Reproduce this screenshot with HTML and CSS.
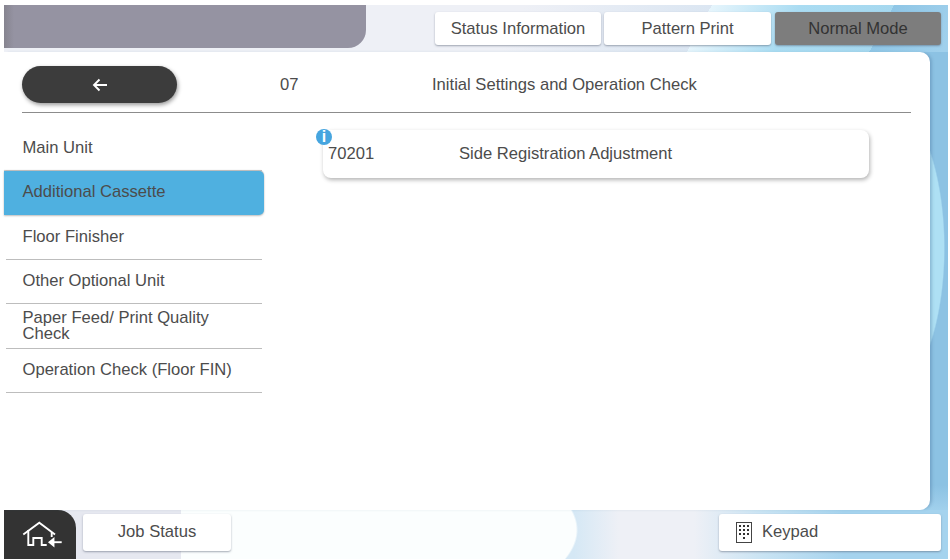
FILE: index.html
```html
<!DOCTYPE html>
<html lang="en">
<head>
    <meta charset="UTF-8">
    <title>Initial Settings and Operation Check</title>
    <link rel="stylesheet" href="styles.css">
</head>
<body>
    <div class="screen">
        <header class="top-bar">
            <div class="top-plate"></div>
            <div class="top-buttons">
                <button class="top-btn">Status Information</button>
                <button class="top-btn wide">Pattern Print</button>
                <button class="top-btn mode">Normal Mode</button>
            </div>
        </header>
        <main class="panel">
            <div class="title-row">
                <button class="back-btn">
                    <svg width="16" height="14" viewBox="0 0 16 14"><path d="M15 7H2M7.500 1.500 2 7l5.500 5.500" fill="none" stroke="#fff" stroke-width="1.900"/></svg>
                </button>
                <span class="title-code">07</span>
                <span class="title-text">Initial Settings and Operation Check</span>
            </div>
            <div class="body-row">
                <ul class="side-menu">
                    <li class="side-item">Main Unit</li>
                    <li class="side-item active">Additional Cassette</li>
                    <li class="side-item">Floor Finisher</li>
                    <li class="side-item">Other Optional Unit</li>
                    <li class="side-item tight">Paper Feed/ Print Quality Check</li>
                    <li class="side-item">Operation Check (Floor FIN)</li>
                </ul>
                <div class="content">
                    <div class="adjust-card">
                        <span class="info-badge">i</span>
                        <span class="adjust-code">70201</span>
                        <span class="adjust-name">Side Registration Adjustment</span>
                    </div>
                </div>
            </div>
        </main>
        <footer class="bottom-bar">
            <button class="home-btn">
                <svg width="44" height="30" viewBox="0 0 44 30" fill="none" stroke="#fff" stroke-width="1.900">
                    <path d="M3.300 14.500 19.300 2.800 35 14.500"/>
                    <path d="M8.300 10V25H13.300V18H21.700V25H26.700"/>
                    <path d="M31.700 12v5"/>
                    <path d="M41.700 22.200H30"/>
                    <path d="M33.500 19 29.500 22.200l4 3.200z" fill="#fff"/>
                </svg>
            </button>
            <button class="job-btn">Job Status</button>
            <button class="keypad-btn">
                <svg width="16" height="21" viewBox="0 0 16 21">
                    <rect x=".5" y=".5" width="15" height="20" fill="#fff" stroke="#444"/>
                    <path d="M3 3h2v2H3zM7 3h2v2H7zM11 3h2v2h-2zM3 7h2v2H3zM7 7h2v2H7zM11 7h2v2h-2zM3 11h2v2H3zM7 11h2v2H7zM11 11h2v2h-2zM7 15h2v2H7z" fill="#333"/>
                </svg>
                <span>Keypad</span>
            </button>
        </footer>
    </div>
</body>
</html>
```

FILE: styles.css
```css
html, body {
    margin: 0;
    padding: 0;
    background: #fff;
}
body {
    padding: 5px 2px 1px 4px;
    box-sizing: border-box;
    height: 560px;
    overflow: hidden;
    font-family: "Liberation Sans", Arial, sans-serif;
    font-size: 16.600px;
    color: #4c4c4c;
}
button {
    font-family: inherit;
    font-size: inherit;
    border: none;
    cursor: pointer;
    padding: 0;
}
.screen {
    height: 554px;
    display: flex;
    flex-direction: column;
    background:
        radial-gradient(ellipse 65px 155px at 876px 243px, #aee0f4 98%, transparent 100%),
        linear-gradient(180deg, #a8d8f0 0, #8cc2e3 40px, #8cc2e3 480px, #a5d3ee 510px);
}
.top-bar {
    height: 47px;
    display: flex;
    justify-content: space-between;
    flex-shrink: 0;
    background: linear-gradient(118deg, #eef0f6 0, #eef0f6 460px, #dbe6f2 625px, #e6f5fc 625px, #aadcf2 703px, #a6d8ef 786px, #8fc6e6 786px, #a0d0ec 850px);
}
.top-plate {
    width: 362px;
    height: 43px;
    background: linear-gradient(90deg, #86848f 0, #9593a2 10px);
    border-bottom-right-radius: 18px;
}
.top-buttons {
    display: flex;
    gap: 3px;
    padding-top: 7px;
    padding-right: 7px;
}
.top-btn {
    width: 166px;
    height: 33px;
    background: #fff;
    color: #4c4c4c;
    border-radius: 3px;
    box-shadow: 0 1px 2px rgba(80, 90, 110, 0.5);
}
.top-btn.wide {
    width: 167px;
    margin-right: 1px;
}
.top-btn.mode {
    background: #7d7d7d;
    color: #333;
}
.panel {
    width: 926px;
    height: 458px;
    background: #fff;
    border-radius: 0 10px 10px 0;
    box-shadow: 3px 0 3px -1px rgba(60, 100, 140, 0.3);
    flex-shrink: 0;
    display: flex;
    flex-direction: column;
    position: relative;
}
.title-row {
    margin: 0 18px;
    height: 61px;
    padding-top: 5px;
    box-sizing: border-box;
    border-bottom: 1px solid #8c8c8c;
    display: flex;
    align-items: center;
    width: 889px;
    flex-shrink: 0;
}
.back-btn {
    width: 155px;
    height: 37px;
    border-radius: 19px;
    background: #3c3c3c;
    box-shadow: 1px 2px 4px rgba(0, 0, 0, 0.4);
    display: flex;
    align-items: center;
    justify-content: center;
}
.title-code {
    margin-left: 103px;
    width: 152px;
}
.body-row {
    display: flex;
    flex: 1;
}
.side-menu {
    list-style: none;
    margin: 13px 0 0;
    padding: 0;
    width: 260px;
}
.side-item {
    height: 44.400px;
    box-sizing: border-box;
    border-bottom: 1px solid #bdbdbd;
    margin: 0 2px;
    padding: 0 30px 0 16.500px;
    display: flex;
    align-items: center;
    line-height: 16px;
}
.side-item:first-child {
    height: 45px;
}
.side-item.active {
    margin: 0;
    padding-left: 18.500px;
    padding-bottom: 2px;
    background: #4fb0e0;
    border-bottom: none;
    border-radius: 0 5px 5px 0;
    box-shadow: 0 -1px 1px #bdbdbd, 0 1px 2px #bdbdbd;
}
.content {
    padding: 17px 0 0 59px;
}
.adjust-card {
    position: relative;
    width: 546px;
    height: 48px;
    background: #fff;
    border-radius: 8px;
    box-shadow: 1px 2px 4px rgba(0, 0, 0, 0.3);
    display: flex;
    align-items: center;
    padding-left: 5px;
    box-sizing: border-box;
}
.adjust-code {
    width: 131px;
}
.info-badge {
    position: absolute;
    left: -7px;
    top: -1px;
    width: 16px;
    height: 16px;
    border-radius: 50%;
    background: #46a5df;
    color: #fff;
    font-size: 16px;
    font-weight: bold;
    line-height: 16px;
    text-align: center;
}
.bottom-bar {
    flex: 1;
    display: flex;
    align-items: flex-start;
    background:
        linear-gradient(90deg, #e6e8f0 0, #e6e8f0 177px, transparent 177px),
        radial-gradient(ellipse 397px 120px at 177px 20px, #fbfefe 99.500%, transparent 100%),
        linear-gradient(90deg, #d5e8f5 570px, #eef0f6 615px, #eef0f6 690px, #c8e3f3 760px, #a5d3ee 840px);
}
.home-btn {
    width: 72px;
    height: 49px;
    padding-left: 4px;
    background: #333;
    border-top-right-radius: 18px;
    display: flex;
    align-items: center;
    justify-content: center;
}
.job-btn {
    width: 148px;
    height: 37px;
    margin: 4px 0 0 7px;
    padding-bottom: 2px;
    background: #fff;
    color: #4c4c4c;
    border-radius: 3px;
    box-shadow: 0 1px 2px rgba(80, 90, 110, 0.5);
}
.keypad-btn {
    width: 222px;
    height: 37px;
    margin: 4px 7px 0 auto;
    padding-bottom: 1px;
    background: #fff;
    color: #4c4c4c;
    border-radius: 3px;
    box-shadow: 0 1px 2px rgba(80, 90, 110, 0.5);
    display: flex;
    align-items: center;
    gap: 10px;
    padding-left: 17px;
}
```
